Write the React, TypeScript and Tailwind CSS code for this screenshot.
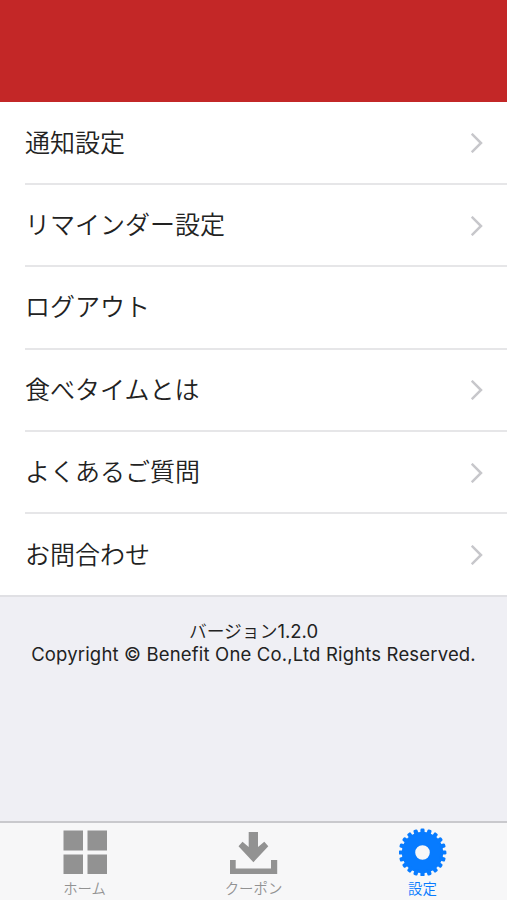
import type { ReactNode } from 'react';
import clsx from 'clsx';

const menuItems = [
  { label: '通知設定', hasArrow: true },
  { label: 'リマインダー設定', hasArrow: true },
  { label: 'ログアウト', hasArrow: false },
  { label: '食べタイムとは', hasArrow: true },
  { label: 'よくあるご質問', hasArrow: true },
  { label: 'お問合わせ', hasArrow: true },
];

// Angles of the cog's 20 teeth
const teeth = Array.from({ length: 20 }, (_, i) => i * 18);

function Chevron() {
  return (
    <svg className="h-5 w-3 shrink-0" viewBox="0 0 12 20" fill="none" stroke="#c7c7cb" strokeWidth="2.5">
      <path d="M0.7 0.8 10 10 0.7 19.2" />
    </svg>
  );
}

function HomeIcon() {
  return (
    <svg className="size-12" viewBox="0 0 48 48" fill="currentColor">
      <path d="M2.5 2.5h19.5v20h-19.5zM26.5 2.5h19.5v20h-19.5zM2.5 26.5h19.5v19.5h-19.5zM26.5 26.5h19.5v19.5h-19.5z" />
    </svg>
  );
}

function CouponIcon() {
  return (
    <svg className="size-12" viewBox="0 0 48 48" fill="currentColor">
      <path d="M18.7 4h9.3v15l6.3-5.2 4 4.4L23.4 34.2 8.5 18.2l4-4.4 6.2 5.2z" />
      <path d="M-0.5 32h6.2v8.5h35.3V32h6.2v14H-0.5z" />
    </svg>
  );
}

function SettingsIcon() {
  return (
    <svg className="size-12" viewBox="0 0 48 48" fill="currentColor">
      <path
        fillRule="evenodd"
        d="M23.5 3.8a20.7 20.7 0 1 0 0 41.4a20.7 20.7 0 1 0 0-41.4zM23.5 17.2a7.3 7.3 0 1 1 0 14.6a7.3 7.3 0 1 1 0-14.6z"
      />
      {teeth.map((angle) => (
        <rect key={angle} x="21.4" y="0.6" width="4.2" height="6" rx="1.3" transform={`rotate(${angle} 23.5 24.5)`} />
      ))}
    </svg>
  );
}

function Tab({ label, icon, active = false }: { label: string; icon: ReactNode; active?: boolean }) {
  return (
    <button
      className={clsx(
        'flex flex-1 flex-col items-center pt-[5px]',
        active ? 'text-[#077bff]' : 'text-[#929292]'
      )}
    >
      {icon}
      <span className="mt-[3px] text-[14.4px] font-[350] leading-5">{label}</span>
    </button>
  );
}

export default function App() {
  return (
    <div className="flex h-screen flex-col bg-[#efeff4] font-['Inter','Noto_Sans_CJK_JP',sans-serif] text-[#222]">
      <header className="h-[102px] shrink-0 bg-[#c32727]" />

      <ul className="border-b-2 border-[#e0e0e4] bg-white pt-[0.7px]">
        {menuItems.map((item, index) => (
          <li key={item.label} className="pl-[25px]">
            <div
              className={clsx(
                'flex items-center justify-between pt-px pr-6',
                index < menuItems.length - 1 ? 'h-[82.3px] border-b-2 border-[#e6e6e8]' : 'h-[80.8px]'
              )}
            >
              <span className="text-[25px] font-[350] leading-none">{item.label}</span>
              {item.hasArrow && <Chevron />}
            </div>
          </li>
        ))}
      </ul>

      <footer className="pt-[23px] text-center text-[18.5px] leading-[22px]">
        <p>
          <span className="text-[17.8px] font-[350]">バージョン</span>1.2.0
        </p>
        <p className="tracking-[0.17px]">Copyright © Benefit One Co.,Ltd Rights Reserved.</p>
      </footer>

      <nav className="mt-auto flex h-[79px] shrink-0 border-t-2 border-[#c9c9cd] bg-[#f7f7f8]">
        <Tab label="ホーム" icon={<HomeIcon />} />
        <Tab label="クーポン" icon={<CouponIcon />} />
        <Tab label="設定" icon={<SettingsIcon />} active />
      </nav>
    </div>
  );
}
